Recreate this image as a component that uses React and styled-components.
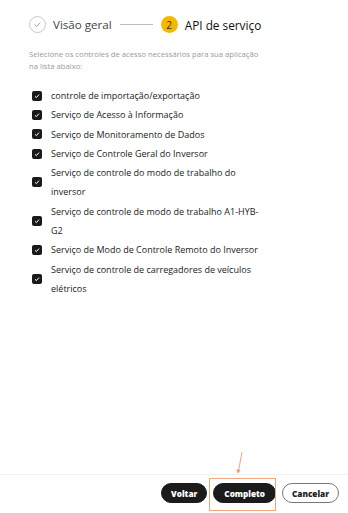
import React from "react";
import styled, { createGlobalStyle } from "styled-components";

const Global = createGlobalStyle`
  html, body { margin: 0; padding: 0; background: #fff; }
  body { font-family: "Open Sans", "Liberation Sans", sans-serif; color: #222; }
  * { box-sizing: border-box; }
`;

const Page = styled.div`
  height: 513px;
  display: flex;
  flex-direction: column;
  position: relative;
`;

const Content = styled.div`
  flex: 1;
  padding: 16px 0 0 29px;
`;

const Steps = styled.div`
  display: flex;
  align-items: center;
  height: 17px;
`;

const StepCircle = styled.div`
  width: 17px;
  height: 17px;
  border-radius: 50%;
  display: flex;
  align-items: center;
  justify-content: center;
  font-size: 10px;
  color: #333;
  background: ${(p) => (p.$active ? "#f5b700" : "#fff")};
  border: ${(p) => (p.$active ? "none" : "1px solid #c8c8c8")};
`;

const StepLabel = styled.span`
  font-size: ${(p) => (p.$active ? "11.8px" : "11.6px")};
  color: ${(p) => (p.$active ? "#111" : "#444")};
  margin-left: 7px;
`;

const StepLine = styled.div`
  width: 33px;
  height: 1px;
  background: #bdbdbd;
  margin: 0 8px 0 8px;
`;

const Desc = styled.p`
  margin: 15px 0 0 0;
  font-size: 7.7px;
  line-height: 12px;
  color: #9a9a9a;
  width: 234px;
`;

const List = styled.div`
  margin-top: 14px;
  display: flex;
  flex-direction: column;
`;

const Item = styled.label`
  display: flex;
  align-items: center;
  padding: 0 0 0 3px;
`;

const Box = styled.span`
  flex: none;
  width: 10px;
  height: 10px;
  border-radius: 2px;
  background: #1a1a1a;
  display: flex;
  align-items: center;
  justify-content: center;
`;

const ItemText = styled.span`
  margin-left: 9px;
  font-size: 9px;
  line-height: 19.3px;
  color: #222;
  width: 213px;
`;

const Footer = styled.div`
  border-top: 1px solid #f0f0f0;
  height: 39px;
  display: flex;
  justify-content: flex-end;
  align-items: center;
  gap: 6px;
  padding: 0 9px 2px 0;
`;

const Button = styled.button`
  height: 20px;
  padding: 0 ${(p) => p.$pad}px;
  border-radius: 10px;
  font-family: "Open Sans", "Liberation Sans", sans-serif;
  font-weight: 800;
  font-size: 8.2px;
  cursor: pointer;
  background: ${(p) => (p.$outline ? "#fff" : "#1b1b1b")};
  color: ${(p) => (p.$outline ? "#222" : "#fff")};
  border: ${(p) => (p.$outline ? "1px solid #777" : "1px solid #1b1b1b")};
`;

const Highlight = styled.div`
  position: absolute;
  left: 209px;
  top: 478px;
  width: 67px;
  height: 33px;
  border: 1px solid #f3a57e;
  pointer-events: none;
`;

const Arrow = styled.svg`
  position: absolute;
  left: 232px;
  top: 448px;
  pointer-events: none;
`;

const Check = () => (
  <svg width="6" height="6" viewBox="0 0 6 6">
    <path d="M1 3.3 L2.4 4.6 L5 1.6" fill="none" stroke="#fff" strokeWidth="1" />
  </svg>
);

const items = [
  "controle de importação/exportação",
  "Serviço de Acesso à Informação",
  "Serviço de Monitoramento de Dados",
  "Serviço de Controle Geral do Inversor",
  "Serviço de controle do modo de trabalho do inversor",
  "Serviço de controle de modo de trabalho A1-HYB-G2",
  "Serviço de Modo de Controle Remoto do Inversor",
  "Serviço de controle de carregadores de veículos elétricos",
];

export default function App() {
  return (
    <Page>
      <Global />
      <Content>
        <Steps>
          <StepCircle>
            <svg width="9" height="9" viewBox="0 0 10 10">
              <path d="M2 5.2 L4.2 7.2 L8 3" fill="none" stroke="#999" strokeWidth="1" />
            </svg>
          </StepCircle>
          <StepLabel>Visão geral</StepLabel>
          <StepLine />
          <StepCircle $active>2</StepCircle>
          <StepLabel $active>API de serviço</StepLabel>
        </Steps>
        <Desc>
          Selecione os controles de acesso necessários para sua aplicação na lista abaixo:
        </Desc>
        <List>
          {items.map((t) => (
            <Item key={t}>
              <Box>
                <Check />
              </Box>
              <ItemText>{t}</ItemText>
            </Item>
          ))}
        </List>
      </Content>
      <Footer>
        <Button $pad={9}>Voltar</Button>
        <Button $pad={10}>Completo</Button>
        <Button $outline $pad={9}>Cancelar</Button>
      </Footer>
      <Highlight />
      <Arrow width="16" height="28" viewBox="0 0 16 28">
        <path d="M10 4 L6.5 23" stroke="#f08a5d" strokeWidth="0.8" fill="none" />
        <path d="M4.8 21.5 L6.2 25 L8 22" fill="#f08a5d" stroke="#f08a5d" strokeWidth="0.6" />
      </Arrow>
    </Page>
  );
}
